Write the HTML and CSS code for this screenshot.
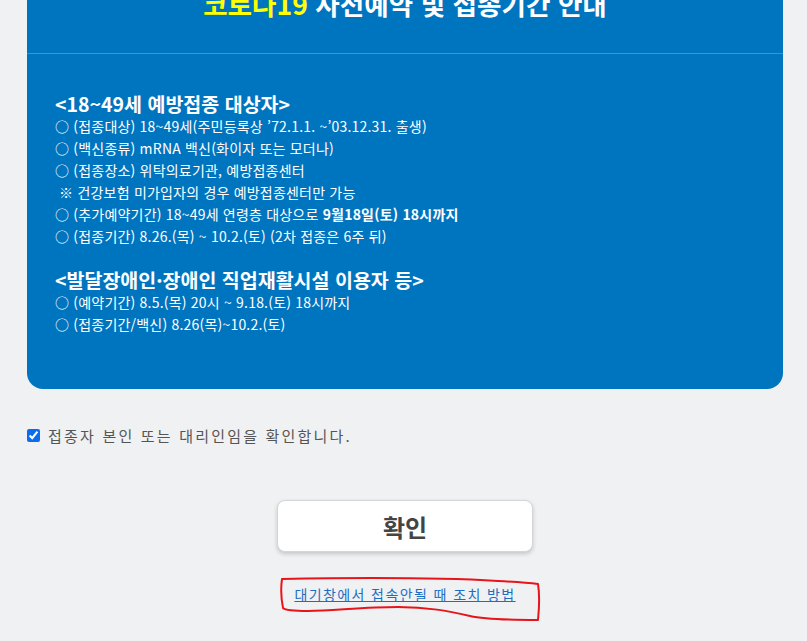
FILE: index.html
```html
<!DOCTYPE html>
<html lang="ko">
<head>
    <meta charset="UTF-8">
    <meta name="viewport" content="width=device-width, initial-scale=1.0">
    <title>코로나19 사전예약 및 접종기간 안내</title>
    <link rel="stylesheet" href="styles.css">
</head>
<body>
    <div class="wrap">
        <div class="notice">
            <div class="notice-head">
                <h1><span class="hl">코로나19</span> 사전예약 및 접종기간 안내</h1>
            </div>
            <div class="notice-body">
                <h2>&lt;18~49세 예방접종 대상자&gt;</h2>
                <p>○ (접종대상) 18~49세(주민등록상 ’72.1.1. ~’03.12.31. 출생)</p>
                <p>○ (백신종류) mRNA 백신(화이자 또는 모더나)</p>
                <p>○ (접종장소) 위탁의료기관, 예방접종센터</p>
                <p>&nbsp;※ 건강보험 미가입자의 경우 예방접종센터만 가능</p>
                <p>○ (추가예약기간) 18~49세 연령층 대상으로 <b>9월18일(토) 18시까지</b></p>
                <p>○ (접종기간) 8.26.(목) ~ 10.2.(토) (2차 접종은 6주 뒤)</p>

                <h2 class="second">&lt;발달장애인·장애인 직업재활시설 이용자 등&gt;</h2>
                <p>○ (예약기간) 8.5.(목) 20시 ~ 9.18.(토) 18시까지</p>
                <p>○ (접종기간/백신) 8.26(목)~10.2.(토)</p>
            </div>
        </div>

        <label class="agree">
            <input type="checkbox" checked>
            <span>접종자 본인 또는 대리인임을 확인합니다.</span>
        </label>

        <div class="actions">
            <button class="btn-ok">확인</button>
        </div>

        <div class="help">
            <span class="help-mark">
                <a href="#">대기창에서 접속안될 때 조치 방법</a>
                <!-- 손으로 그린 빨간 표시 -->
                <svg class="scribble" width="264" height="50" viewBox="0 0 264 50">
                    <path d="M4 5 C 60 4, 150 3, 220 7 C 240 8, 252 9, 260 10 C 262 22, 261 36, 260 46 C 232 46, 205 45, 192 42 C 170 37, 150 33, 120 33 C 90 33, 60 36, 30 37 C 15 37, 7 36, 5 34 C 3 24, 3 12, 4 5 Z"
                          fill="none" stroke="#e8141b" stroke-width="2" stroke-linejoin="round"/>
                </svg>
            </span>
        </div>
    </div>
</body>
</html>
```

FILE: styles.css
```css
body {
    margin: 0;
    background: #f0f1f3;
    font-family: "Noto Sans CJK KR", "Noto Sans", sans-serif;
    color: #444;
}
.wrap {
    margin: 0 24px 0 27px;
    padding-bottom: 60px;
}
.notice {
    margin-top: -35px;
    background: #0075bf;
    border-radius: 0 0 16px 16px;
    color: #fff;
}
.notice-head {
    padding: 22px 0 32px;
    border-bottom: 1px solid #3d93d3;
    text-align: center;
}
.notice-head h1 {
    margin: 0;
    font-size: 26.6px;
    line-height: 34px;
    font-weight: 700;
}
.hl {
    color: #ffff00;
}
.notice-body {
    padding: 39px 28px 54px;
}
.notice-body h2 {
    margin: 0;
    font-size: 19.5px;
    line-height: 22px;
    font-weight: 700;
}
.notice-body h2.second {
    margin-top: 22px;
}
.notice-body p {
    margin: 0;
    font-size: 14px;
    line-height: 22px;
    letter-spacing: 0.2px;
}
.agree {
    display: flex;
    align-items: center;
    gap: 8px;
    margin-top: 35px;
    height: 22px;
    font-size: 15px;
    letter-spacing: 2.2px;
    color: #555;
}
.agree input {
    margin: 0;
    width: 13px;
    height: 13px;
    accent-color: #0b6cf0;
}
.actions {
    display: flex;
    justify-content: center;
    margin-top: 54px;
}
.btn-ok {
    width: 256px;
    height: 52px;
    background: #fff;
    border: 1px solid #d3d5da;
    border-radius: 8px;
    box-shadow: 0 2px 4px rgba(0, 0, 0, 0.18);
    font-family: inherit;
    font-size: 24px;
    font-weight: 700;
    color: #444;
    cursor: pointer;
}
.help {
    margin-top: 31px;
    text-align: center;
    line-height: 20px;
}
.help-mark {
    position: relative;
    display: inline-block;
}
.help-mark a {
    font-size: 14px;
    letter-spacing: 1.4px;
    color: #1b6ec2;
}
.scribble {
    position: absolute;
    left: -16px;
    top: -9px;
    pointer-events: none;
}
```
